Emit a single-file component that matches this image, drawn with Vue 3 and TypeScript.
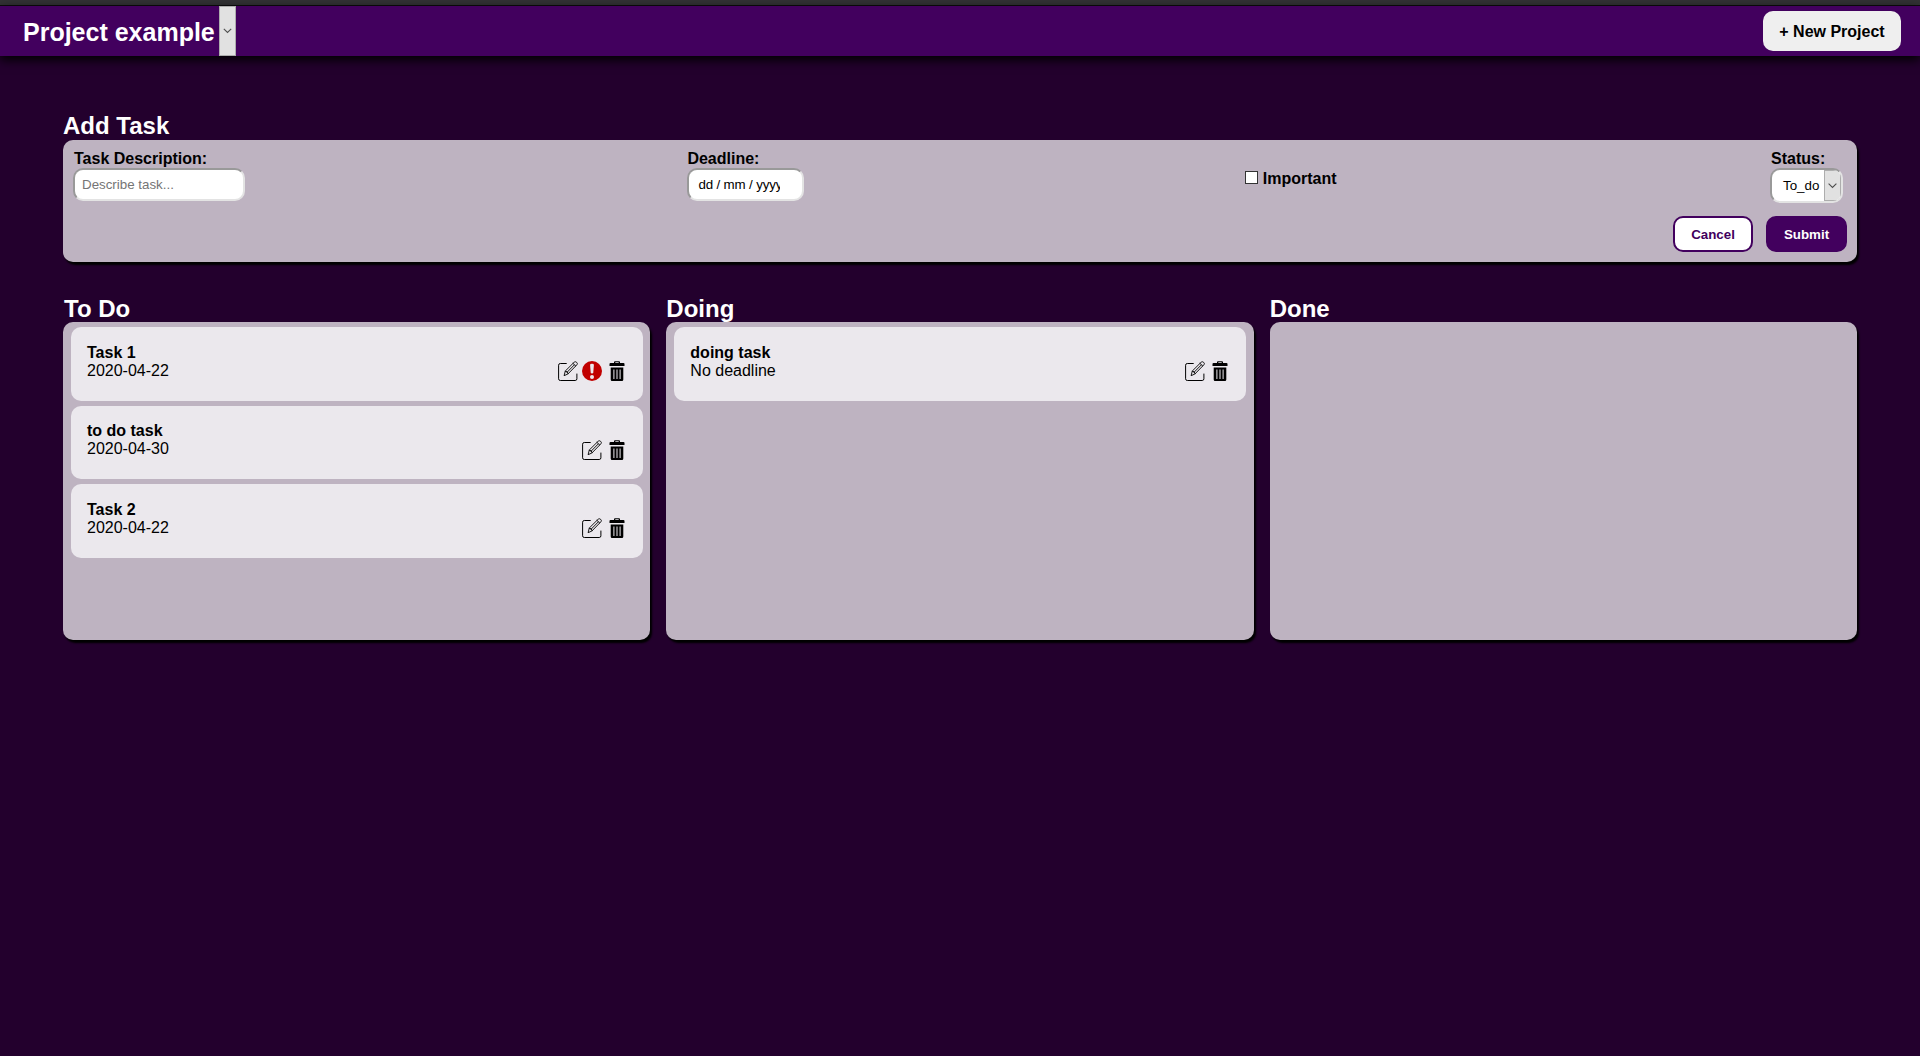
<script setup lang="ts">
interface Task {
  title: string
  deadline: string
  important?: boolean
}

interface Column {
  name: string
  tasks: Task[]
}

const columns: Column[] = [
  {
    name: 'To Do',
    tasks: [
      { title: 'Task 1', deadline: '2020-04-22', important: true },
      { title: 'to do task', deadline: '2020-04-30' },
      { title: 'Task 2', deadline: '2020-04-22' },
    ],
  },
  { name: 'Doing', tasks: [{ title: 'doing task', deadline: 'No deadline' }] },
  { name: 'Done', tasks: [] },
]
</script>

<template>
  <div class="page">
    <div class="strip"></div>
    <header class="topbar">
      <div class="project">
        <h1>Project example</h1>
        <button class="drop" type="button" aria-label="Choose project">
          <svg width="9" height="6" viewBox="0 0 9 6"><path d="M.8 .8 4.5 4.5 8.2 .8" fill="none" stroke="#505050" stroke-width="1.1" /></svg>
        </button>
      </div>
      <button class="new-project" type="button">+ New Project</button>
    </header>

    <main>
      <h2 class="form-heading">Add Task</h2>
      <form class="panel form" @submit.prevent>
        <div class="fields">
          <div class="field">
            <label for="desc">Task Description:</label>
            <input id="desc" class="control desc" type="text" placeholder="Describe task..." />
          </div>
          <div class="field deadline">
            <label>Deadline:</label>
            <div class="control date"><span>dd / mm / yyyy</span></div>
          </div>
          <label class="important"><span class="box"></span>Important</label>
          <div class="field status">
            <label>Status:</label>
            <div class="control select">
              <span>To_do</span>
              <i class="arrow"><svg width="9" height="6" viewBox="0 0 9 6"><path d="M.6 .6 4.5 4.5 8.4 .6" fill="none" stroke="#505050" stroke-width="1.1" /></svg></i>
            </div>
          </div>
        </div>
        <div class="actions">
          <button class="btn cancel" type="button">Cancel</button>
          <button class="btn submit" type="submit">Submit</button>
        </div>
      </form>

      <div class="board">
        <section v-for="column in columns" :key="column.name" class="column">
          <h2>{{ column.name }}</h2>
          <div class="panel list">
            <article v-for="task in column.tasks" :key="task.title" class="card">
              <div class="info">
                <h3>{{ task.title }}</h3>
                <p>{{ task.deadline }}</p>
              </div>
              <div class="icons">
                <svg class="icon" viewBox="0 0 20 20" fill="none" stroke="#000" stroke-linecap="round" stroke-linejoin="round">
                  <path d="M8.3 2.5H2.3Q.6 2.5 .6 4.2V17.8Q.6 19.5 2.3 19.5H17.2Q18.9 19.5 18.9 17.8V13" stroke-width="1" />
                  <path d="M6.2 14.3 7.3 10 16.2 1.2Q17.3 .2 18.6 1.3 20 2.6 18.9 3.8L10.2 12.7ZM7.3 10Q9.8 10.1 10.2 12.7M15 2.4 17.7 5M9 11.3 16.2 4" stroke-width=".9" />
                </svg>
                <svg v-if="task.important" class="icon alert" viewBox="0 0 20 20">
                  <circle cx="10" cy="10" r="10" fill="#c10000" />
                  <path d="M8.1 4Q8 2.7 10 2.7T11.9 4L11.3 11.2Q11.2 12.4 10 12.4T8.7 11.2Z" fill="#ece9ee" />
                  <circle cx="10" cy="16" r="2" fill="#ece9ee" />
                </svg>
                <svg class="icon trash" viewBox="0 0 16 20">
                  <path d="M5 2V1.2Q5 .3 6 .3H10Q11 .3 11 1.2V2H14.5Q15.5 2 15.5 3V5H.5V3Q.5 2 1.5 2ZM6.3 1.3V2H9.7V1.3ZM1.7 6.5H14.3V18.5Q14.3 20 13 20H3Q1.7 20 1.7 18.5ZM4.4 8.5V18H5.4V8.5ZM7.5 8.5V18H8.5V8.5ZM10.6 8.5V18H11.6V8.5Z" fill="#000" fill-rule="evenodd" />
                </svg>
              </div>
            </article>
          </div>
        </section>
      </div>
    </main>
  </div>
</template>

<style>
body {
  background: #23002d;
}
</style>

<style scoped>
* {
  box-sizing: border-box;
}
.page {
  min-height: 1056px;
  background: #23002d;
  font: 16px/18px "Liberation Sans", Arial, sans-serif;
  color: #000;
}
h1, h2, h3, p {
  margin: 0;
}
button {
  font-family: inherit;
}
.strip {
  height: 6px;
  background: #323234;
  border-bottom: 1px solid #0c0c0d;
}
.topbar {
  height: 50px;
  padding: 0 19px 0 23px;
  display: flex;
  align-items: center;
  justify-content: space-between;
  background: #42005e;
  box-shadow: 0 4px 10px #000;
}
.project {
  display: flex;
  align-items: center;
  height: 100%;
}
h1 {
  width: 196px;
  padding-top: 1px;
  white-space: nowrap;
  font-size: 25px;
  line-height: 28px;
  color: #fff;
}
.drop {
  width: 17px;
  height: 50px;
  padding: 0;
  display: flex;
  align-items: center;
  justify-content: center;
  background: #e1e1e1;
  border: 1px solid #adadad;
}
.new-project {
  width: 138px;
  height: 40px;
  padding: 2px 0 0;
  border: 0;
  border-radius: 10px;
  background: #efefef;
  font-size: 16px;
  font-weight: bold;
  color: #000;
}
main {
  padding: 56px 63px 0;
}
h2 {
  font-size: 24px;
  line-height: 28px;
  color: #fff;
}
.panel {
  background: #beb3c1;
  border-radius: 10px;
  box-shadow: 2px 3px 2px #000;
}
.form {
  height: 122px;
  padding: 10px 10px 10px 11px;
  display: flex;
  flex-direction: column;
  justify-content: space-between;
}
.fields {
  display: flex;
  justify-content: space-between;
  padding-right: 4px;
}
.field {
  display: flex;
  flex-direction: column;
}
.deadline {
  margin-left: 9px;
}
.status label {
  padding-left: 1px;
}
label {
  font-weight: bold;
}
.control {
  height: 33px;
  border: 2px solid;
  border-color: #999 #e3e3e3 #e3e3e3 #999;
  border-radius: 10px;
  background: #fff;
  font: 13.333px/18px "Liberation Sans", Arial, sans-serif;
  color: #000;
}
.desc {
  width: 172px;
  margin-left: -1px;
  padding: 0 7px;
}
.desc::placeholder {
  color: #757575;
}
.date {
  width: 117px;
  padding: 6px 9px;
}
.date span {
  display: block;
  width: 82px;
  overflow: hidden;
  white-space: nowrap;
  letter-spacing: -0.15px;
}
.important {
  display: flex;
  align-items: center;
  gap: 5px;
  height: 18px;
  margin: 20px 0 0 7px;
}
.box {
  width: 13px;
  height: 13px;
  margin-bottom: 3px;
  border: 1px solid #333;
  background: #fff;
}
.select {
  width: 73px;
  height: 35px;
  display: flex;
  align-items: center;
  justify-content: space-between;
  padding-left: 11px;
  overflow: hidden;
}
.arrow {
  width: 17px;
  height: 31px;
  display: flex;
  align-items: center;
  justify-content: center;
  background: #e1e1e1;
  border: 1px solid #adadad;
}
.actions {
  display: flex;
  justify-content: flex-end;
  gap: 13px;
}
.btn {
  height: 36px;
  padding: 0;
  border: 2px solid #42005e;
  border-radius: 10px;
  font-size: 13.333px;
  font-weight: bold;
}
.cancel {
  width: 80px;
  background: #fff;
  color: #42005e;
}
.submit {
  width: 81px;
  background: #42005e;
  color: #fff;
}
.board {
  display: flex;
  gap: 16px;
  margin-top: 32px;
}
.column {
  flex: 1;
  min-width: 0;
}
.column h2 {
  height: 28px;
  padding-top: 1px;
}
.column:first-child h2 {
  padding-left: 1px;
}
.list {
  height: 318px;
  padding: 5px 7.3px 0 8px;
  display: flex;
  flex-direction: column;
  gap: 5px;
}
.card {
  height: 73.6px;
  padding: 16.6px 18px 0 16px;
  display: flex;
  justify-content: space-between;
  background: #ebe8ed;
  border-radius: 10px;
}
h3 {
  font-size: 16px;
  line-height: 18px;
}
.icons {
  display: flex;
  padding-top: 17.4px;
}
.icon {
  width: 20px;
  height: 20px;
}
.alert {
  margin-left: 4px;
}
.trash {
  width: 16px;
  margin-left: 7px;
}
</style>
